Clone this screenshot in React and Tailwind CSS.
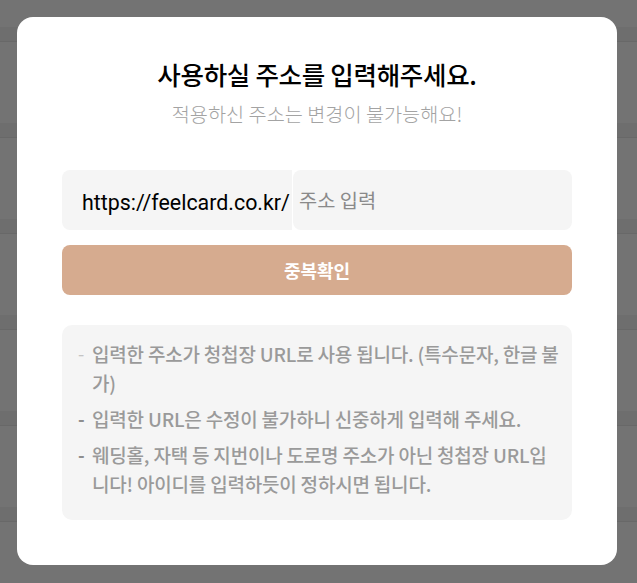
import React from "react";

const KR = { fontFamily: '"Noto Sans CJK KR", "Noto Sans", sans-serif' };

function BackgroundRows() {
  const rows = [0, 1, 2, 3, 4, 5];
  return (
    <div className="flex flex-col">
      <div className="h-[27px]" />
      {rows.map((i) => (
        <div key={i} className="flex flex-col">
          <div className="h-[14px] bg-[#6e6e6e]" />
          <div className="h-px bg-[#686868]" />
          <div className="h-[81px]" />
        </div>
      ))}
    </div>
  );
}

const items = [
  { lines: ["입력한 주소가 청첩장 URL로 사용 됩니다. (특수문자, 한글 불", "가)"], light: true },
  { lines: ["입력한 URL은 수정이 불가하니 신중하게 입력해 주세요."] },
  { lines: ["웨딩홀, 자택 등 지번이나 도로명 주소가 아닌 청첩장 URL입", "니다! 아이디를 입력하듯이 정하시면 됩니다."] },
];

export default function App() {
  return (
    <div className="relative w-[637px] h-[583px] overflow-hidden bg-[#737373]">
      <BackgroundRows />
      <div className="absolute inset-0 flex items-start justify-start pt-[17px] pl-[17px]">
        <div
          className="w-[600px] h-[548px] rounded-[16px] bg-white flex flex-col px-[45px] pt-[40px]"
          style={KR}
        >
          <h1 className="text-center text-[25.5px] leading-[34px] font-medium text-black tracking-[-0.3px]">
            사용하실 주소를 입력해주세요.
          </h1>
          <p className="mt-[9px] text-center text-[19.7px] leading-[28px] font-light text-[#a3a3a3]">
            적용하신 주소는 변경이 불가능해요!
          </p>

          <div className="mt-[42px] flex h-[60px] gap-px">
            <div className="w-[230px] rounded-l-[8px] bg-[#f5f5f5] flex items-center pl-[20px] pt-[5px]">
              <span
                className="text-[21.4px] leading-none text-black whitespace-nowrap"
                style={{ fontFamily: 'Roboto, "Liberation Sans", sans-serif' }}
              >
                https://feelcard.co.kr/
              </span>
            </div>
            <div className="flex-1 rounded-[8px] bg-[#f5f5f5] flex items-center pl-[6px]">
              <input
                type="text"
                placeholder="주소 입력"
                className="w-full bg-transparent outline-none text-[19.8px] text-black placeholder:text-[#8a8a8a]"
                style={KR}
              />
            </div>
          </div>

          <button
            type="button"
            className="mt-[15px] h-[50px] w-full rounded-[8px] bg-[#d6ab8f] text-white text-[18px] font-bold"
            style={KR}
          >
            중복확인
          </button>

          <div className="mt-[30px] h-[195px] rounded-[10px] bg-[#f5f5f5] pl-[16px] pr-[10px] pt-[14px] flex flex-col gap-[7px]">
            {items.map((it, idx) => (
              <div key={idx} className="flex">
                <span
                  className={
                    "w-[14px] shrink-0 text-[18px] leading-[29px] " +
                    (it.light ? "text-[#c4c4c4] font-normal" : "text-[#8e8e8e] font-bold")
                  }
                >
                  -
                </span>
                <div className="flex flex-col">
                  {it.lines.map((ln, j) => (
                    <span
                      key={j}
                      className="whitespace-nowrap text-[19px] leading-[29px] font-medium text-[#9a9a9a] tracking-[-0.2px]"
                    >
                      {ln}
                    </span>
                  ))}
                </div>
              </div>
            ))}
          </div>
        </div>
      </div>
    </div>
  );
}
